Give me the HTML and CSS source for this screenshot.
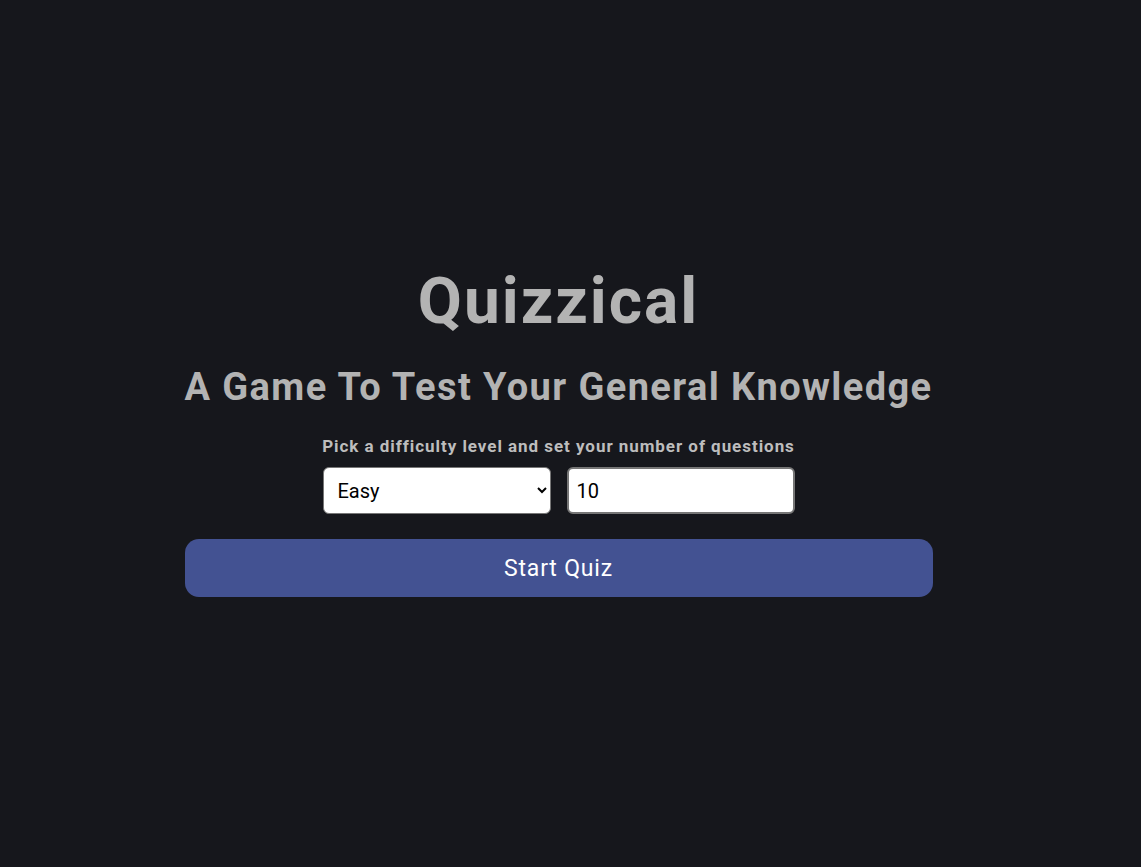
FILE: index.html
```html
<!DOCTYPE html>
<html lang="en">
<head>
<meta charset="utf-8">
<title>Quizzical</title>
<link rel="stylesheet" href="styles.css">
</head>
<body>
<main class="page">
  <section class="intro">
    <h1 class="title">Quizzical</h1>
    <h2 class="subtitle">A Game To Test Your General Knowledge</h2>
    <p class="label">Pick a difficulty level and set your number of questions</p>
    <div class="controls">
      <select class="field select">
        <option>Easy</option>
        <option>Medium</option>
        <option>Hard</option>
      </select>
      <input class="field input" type="number" value="10">
    </div>
    <button class="start">Start Quiz</button>
  </section>
</main>
</body>
</html>
```
FILE: styles.css
```css
* { box-sizing: border-box; }
html, body { margin: 0; padding: 0; }
body {
  background: #16171c;
  font-family: Roboto, "Liberation Sans", sans-serif;
  color: #b3b3b3;
}
.page {
  min-height: 100vh;
  display: flex;
  align-items: center;
  justify-content: center;
  padding-right: 24px;
}
.intro {
  width: 748px;
  display: flex;
  flex-direction: column;
  align-items: center;
}
.title {
  margin: 0;
  font-size: 64px;
  font-weight: 700;
  letter-spacing: 2px;
  line-height: 1;
  color: #b3b3b3;
}
.subtitle {
  margin: 34px 0 0;
  font-size: 38px;
  font-weight: 700;
  line-height: 1;
  letter-spacing: 1.4px;
  color: #b3b3b3;
  white-space: nowrap;
}
.label {
  margin: 30px 0 0;
  font-size: 17px;
  font-weight: 700;
  color: #bdbdbd;
  letter-spacing: 0.95px;
  white-space: nowrap;
}
.controls {
  margin-top: 11px;
  display: flex;
  gap: 16px;
}
.field {
  width: 228px;
  height: 47px;
  border-radius: 6px;
  border: 1px solid #767676;
  background: #fff;
  font-family: inherit;
  font-size: 20px;
  color: #000;
}
.select { padding: 0 8px 0 10px; }
.input { padding: 0 8px; border: 2px solid #767676; }
.start {
  margin-top: 25px;
  width: 748px;
  height: 58px;
  border: none;
  border-radius: 14px;
  background: #435292;
  color: #fff;
  font-family: inherit;
  font-size: 23px;
  font-weight: 400;
  letter-spacing: 0.8px;
  cursor: pointer;
}
```
